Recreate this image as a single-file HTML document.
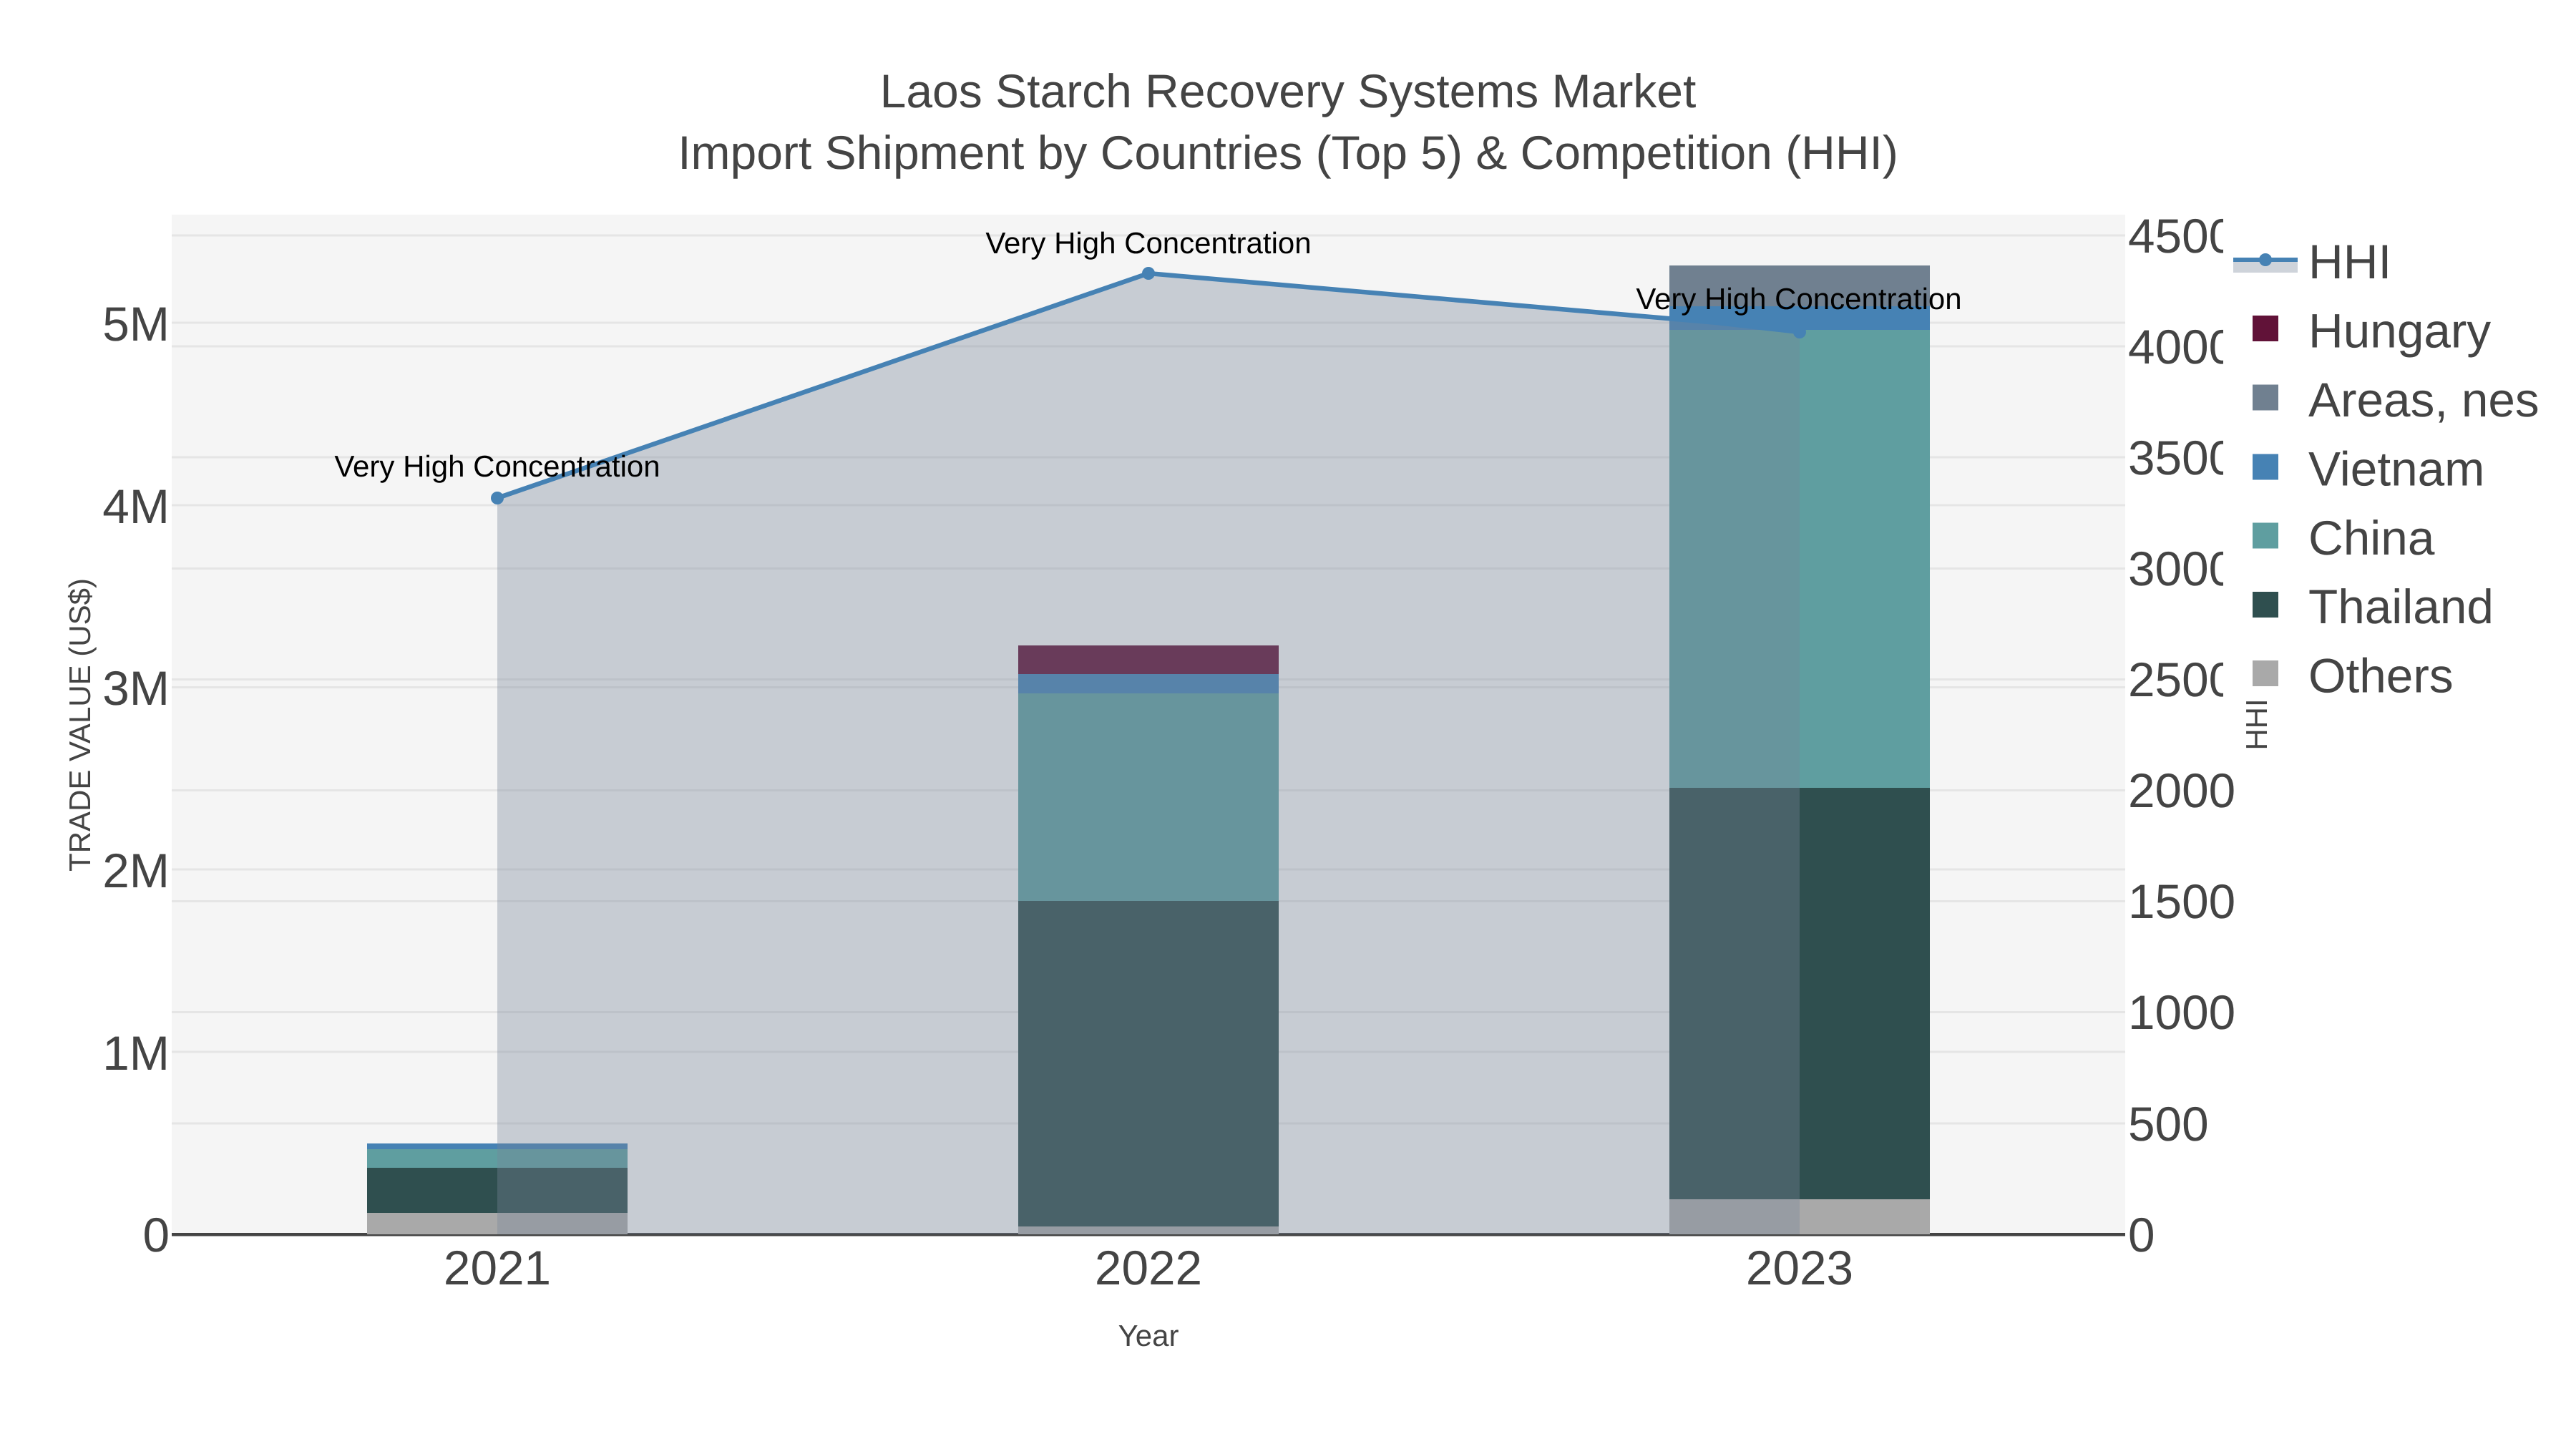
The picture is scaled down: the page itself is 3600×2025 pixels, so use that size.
<!DOCTYPE html>
<html><head><meta charset="utf-8"><style>
html,body{margin:0;padding:0;background:#fff;width:3600px;height:2025px;overflow:hidden}
svg{display:block}
text{font-family:"Liberation Sans",Arial,sans-serif;fill:#444;text-rendering:geometricPrecision}
.t{font-size:67.5px}.s{font-size:42px}.a{font-size:42px;fill:#000;text-anchor:middle}.h{font-size:66px;text-anchor:middle}
</style></head><body>
<svg width="3600" height="2025" viewBox="0 0 3600 2025" xmlns="http://www.w3.org/2000/svg">
<rect width="3600" height="2025" fill="#fff"/>
<rect x="240" y="300" width="2730" height="1425" fill="#f5f5f5"/>
<g stroke="#e5e5e5" stroke-width="3">
<path d="M240 451H2970M240 706H2970M240 960.5H2970M240 1215H2970M240 1470H2970"/>
<path d="M240 329H2970M240 484H2970M240 639H2970M240 794.5H2970M240 949.5H2970M240 1104.5H2970M240 1259.5H2970M240 1414.5H2970M240 1570H2970"/>
</g>
<rect x="240" y="1723" width="2730" height="4.5" fill="#444"/>
<!-- bars -->
<g>
<rect x="513" y="1695" width="364" height="30" fill="#a9a9a9"/>
<rect x="513" y="1632" width="364" height="63" fill="#2f4f4f"/>
<rect x="513" y="1606" width="364" height="26" fill="#5f9ea0"/>
<rect x="513" y="1598" width="364" height="8" fill="#4682b4"/>
<rect x="1423" y="1714" width="364" height="11" fill="#a9a9a9"/>
<rect x="1423" y="1259" width="364" height="455" fill="#2f4f4f"/>
<rect x="1423" y="969" width="364" height="290" fill="#5f9ea0"/>
<rect x="1423" y="942" width="364" height="27" fill="#4682b4"/>
<rect x="1423" y="902" width="364" height="40" fill="#611238"/>
<rect x="2333" y="1676" width="364" height="49" fill="#a9a9a9"/>
<rect x="2333" y="1101" width="364" height="575" fill="#2f4f4f"/>
<rect x="2333" y="461" width="364" height="640" fill="#5f9ea0"/>
<rect x="2333" y="428" width="364" height="33" fill="#4682b4"/>
<rect x="2333" y="371" width="364" height="57" fill="#708090"/>
</g>
<path d="M695 696L1605 382L2400 451L2515 464V1725H695Z" fill="rgb(118,132,152)" fill-opacity=".36"/>
<path d="M695 696L1605 382L2400 451L2515 464" fill="none" stroke="#4682b4" stroke-width="6.5"/>
<circle cx="695" cy="696" r="9" fill="#4682b4"/>
<circle cx="1605" cy="382" r="9" fill="#4682b4"/>
<circle cx="2515" cy="464" r="9" fill="#4682b4"/>
<text class="a" x="695" y="666">Very High Concentration</text>
<text class="a" x="1605" y="354">Very High Concentration</text>
<text class="a" x="2514" y="432">Very High Concentration</text>
<!-- left ticks -->
<g class="t" text-anchor="end">
<text x="237" y="476">5M</text>
<text x="237" y="731">4M</text>
<text x="237" y="985">3M</text>
<text x="237" y="1240">2M</text>
<text x="237" y="1495">1M</text>
<text x="237" y="1749">0</text>
</g>
<!-- right ticks -->
<g class="t">
<text x="2974" y="353">4500</text>
<text x="2974" y="508">4000</text>
<text x="2974" y="663">3500</text>
<text x="2974" y="818">3000</text>
<text x="2974" y="973">2500</text>
<text x="2974" y="1128">2000</text>
<text x="2974" y="1283">1500</text>
<text x="2974" y="1438">1000</text>
<text x="2974" y="1594">500</text>
<text x="2974" y="1749">0</text>
</g>
<g class="t" text-anchor="middle">
<text x="695" y="1795">2021</text>
<text x="1605" y="1795">2022</text>
<text x="2515" y="1795">2023</text>
</g>
<text class="s" text-anchor="middle" x="1605" y="1881">Year</text>
<text class="s" text-anchor="middle" transform="translate(126 1013) rotate(-90)">TRADE VALUE (US$)</text>
<text class="s" text-anchor="middle" transform="translate(3168 1012.5) rotate(-90)">HHI</text>
<text class="h" x="1800" y="150">Laos Starch Recovery Systems Market</text>
<text class="h" x="1800" y="236">Import Shipment by Countries (Top 5) &amp; Competition (HHI)</text>
<!-- legend -->
<rect x="3107" y="300" width="493" height="680" fill="#fff"/>
<rect x="3121" y="363" width="90" height="18" fill="rgb(118,132,152)" fill-opacity=".36"/>
<rect x="3121" y="360" width="90" height="6" fill="#4682b4"/>
<circle cx="3166" cy="363" r="9" fill="#4682b4"/>
<rect x="3148" y="441" width="36" height="36" fill="#611238"/>
<rect x="3148" y="537.5" width="36" height="36" fill="#708090"/>
<rect x="3148" y="634.5" width="36" height="36" fill="#4682b4"/>
<rect x="3148" y="730.5" width="36" height="36" fill="#5f9ea0"/>
<rect x="3148" y="827" width="36" height="36" fill="#2f4f4f"/>
<rect x="3148" y="923" width="36" height="36" fill="#a9a9a9"/>
<g class="t">
<text x="3226" y="389">HHI</text>
<text x="3226" y="485.5">Hungary</text>
<text x="3226" y="582">Areas, nes</text>
<text x="3226" y="678.5">Vietnam</text>
<text x="3226" y="775">China</text>
<text x="3226" y="871">Thailand</text>
<text x="3226" y="967.5">Others</text>
</g>
</svg>
</body></html>
